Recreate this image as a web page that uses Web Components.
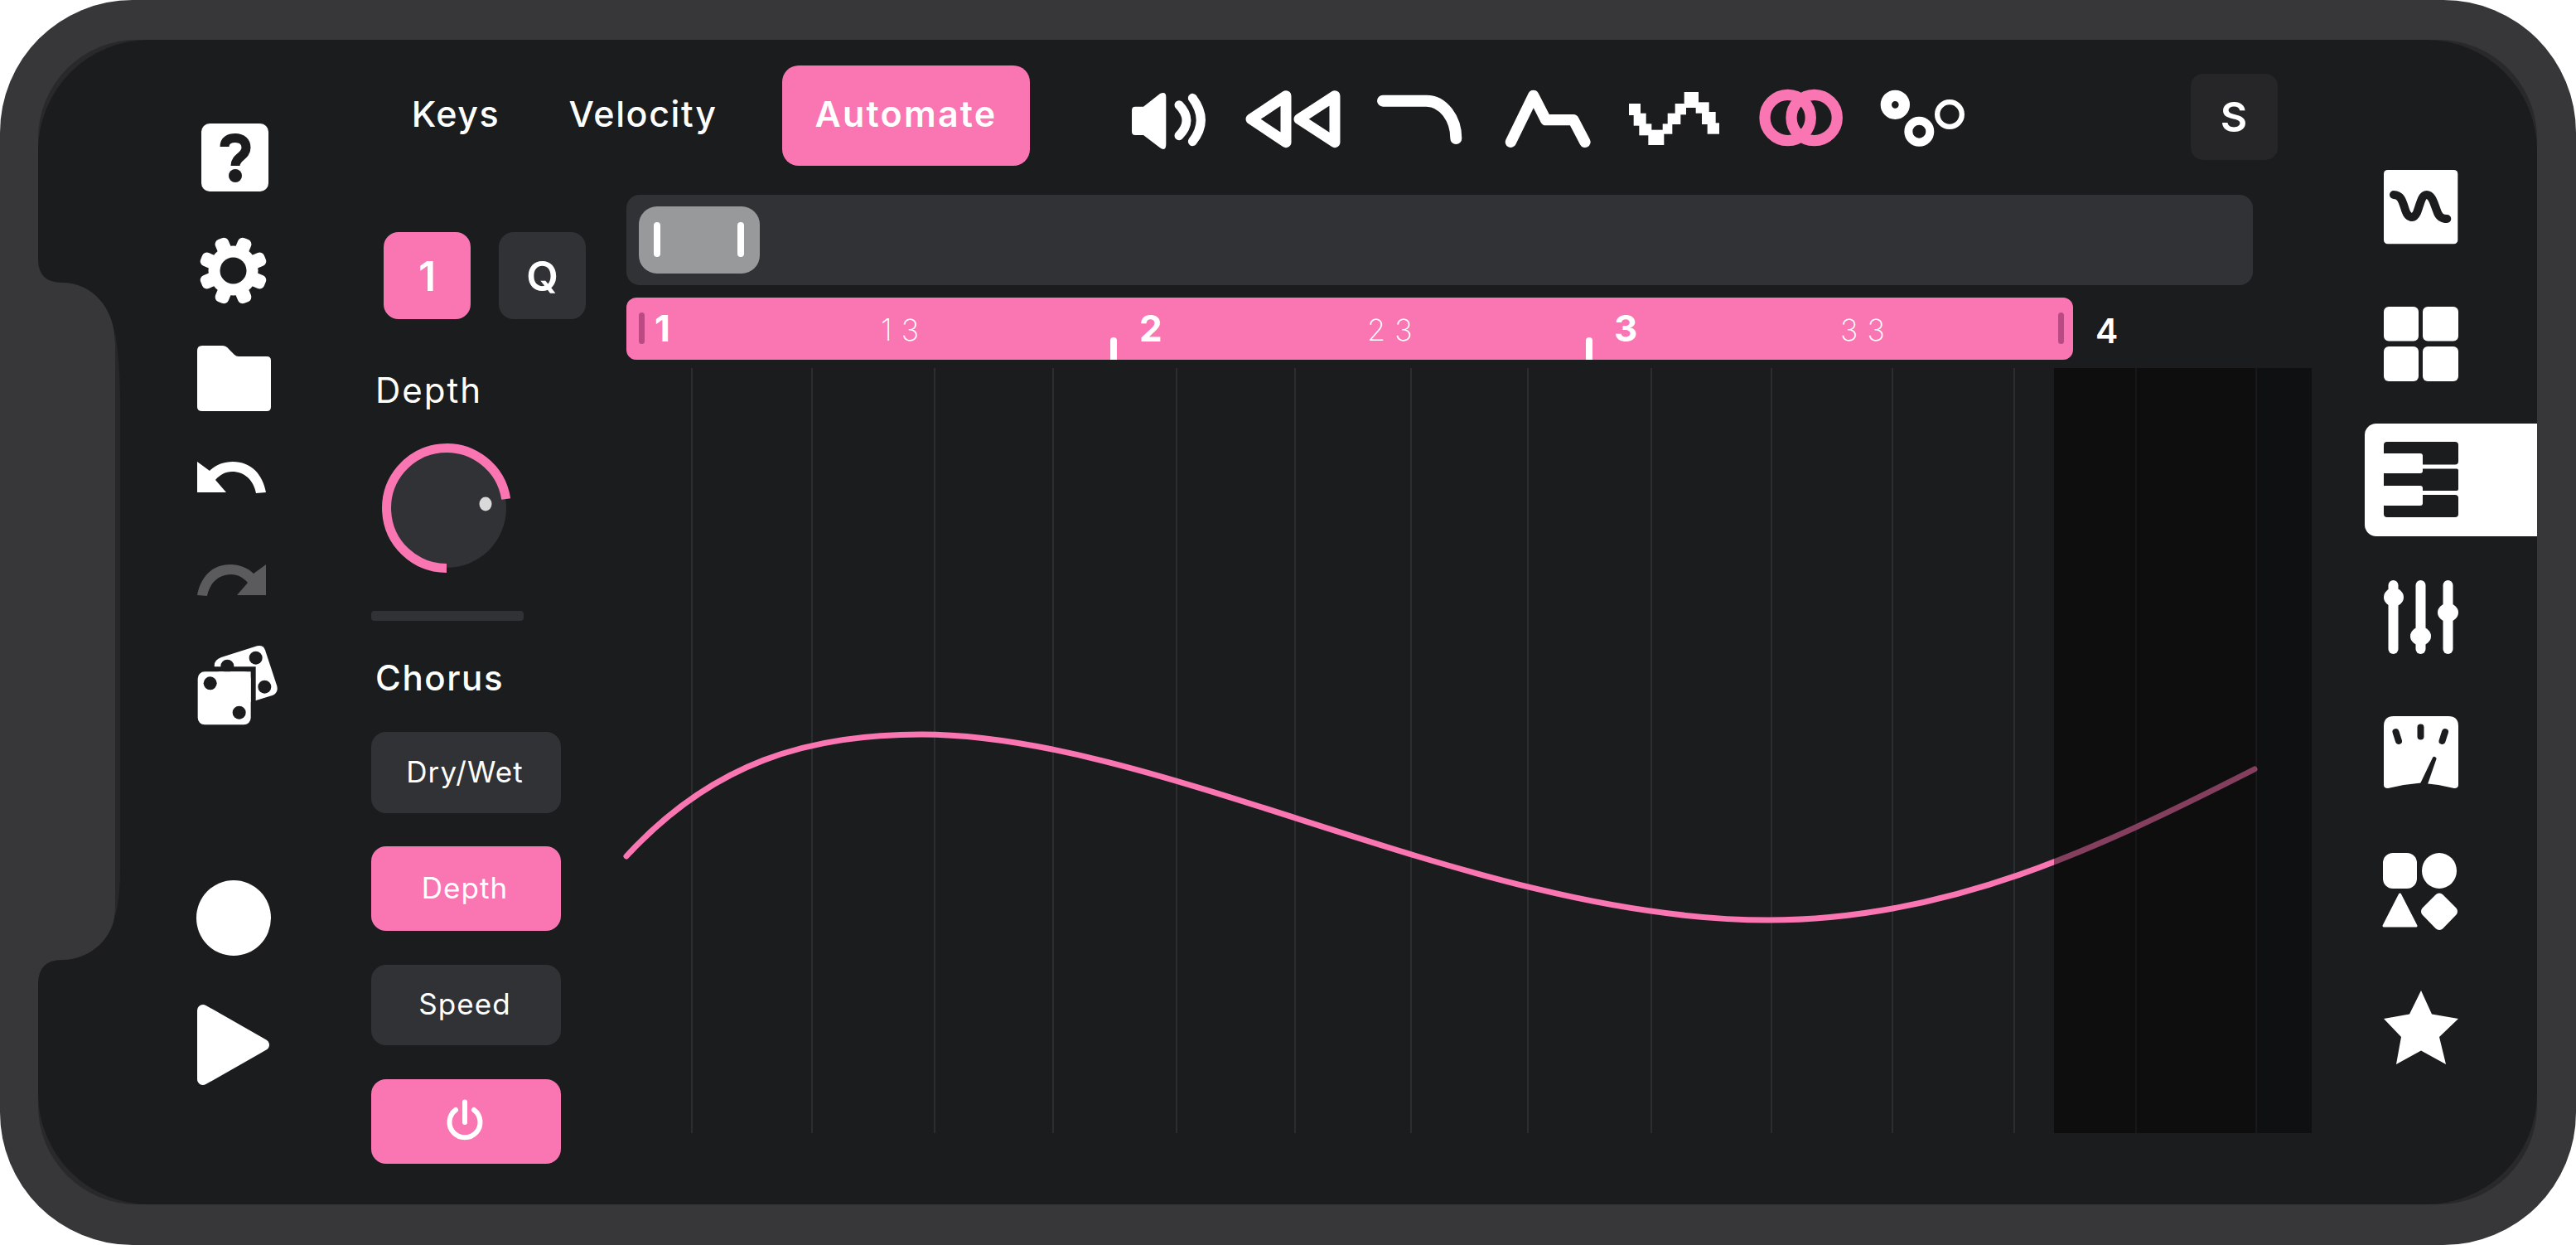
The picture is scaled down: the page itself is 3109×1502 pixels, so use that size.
<!DOCTYPE html>
<html lang="en"><head><meta charset="utf-8"><title>Automate</title>
<style>html,body{margin:0;padding:0;background:#fff;font-family:Inter,"Liberation Sans",sans-serif;color:#fff}</style></head>
<body>
<phone-frame>
  <left-rail></left-rail>
  <main-area></main-area>
  <right-rail></right-rail>
</phone-frame>
<script>
const BG='#1b1c1e',PINK='#f976b2',PANEL='#313236';
const ICONS={
help:[81,82,'0 0 81 82',`<rect width="81" height="82" rx="10" fill="#fff"/><path d="M28 28C28 20 34 17.5 41 17.5C49 17.5 54 22 54 29C54 40 41 40 41 51" fill="none" stroke="${BG}" stroke-width="11"/><ellipse cx="41" cy="63" rx="8" ry="8" fill="${BG}"/>`],
gear:[83,83,'-41.5 -41.5 83 83',`<g fill="#fff"><rect x="-41.5" y="-8.5" width="83" height="17" rx="6" transform="rotate(22.5)"/><rect x="-41.5" y="-8.5" width="83" height="17" rx="6" transform="rotate(67.5)"/><rect x="-41.5" y="-8.5" width="83" height="17" rx="6" transform="rotate(112.5)"/><rect x="-41.5" y="-8.5" width="83" height="17" rx="6" transform="rotate(157.5)"/></g><circle r="30" fill="#fff"/><circle r="16" fill="${BG}"/>`],
folder:[89,79,'0 0 89 79',`<path d="M6 0H30Q35 0 38 4L45 11Q47 13 50 13H84Q89 13 89 18V74Q89 79 84 79H6Q0 79 0 74V6Q0 0 6 0Z" fill="#fff"/>`],
undo:[83,38,'0 0 83 38',`<path d="M0 0L15 11C22 4 32 0 43 0C65 0 79 15 83 37L71 38C68 22 57 12 42 12C34 12 27 16 22 22L35 37H0Z" fill="#fff"/>`],
redo:[83,38,'0 0 83 38',`<path transform="matrix(-1 0 0 1 83 0)" d="M0 0L15 11C22 4 32 0 43 0C65 0 79 15 83 37L71 38C68 22 57 12 42 12C34 12 27 16 22 22L35 37H0Z" fill="#5b5b5d"/>`],
dice:[100,99,'35 20 300 297',`<path d="M125 68L255 27Q277 22 284 42L327 172Q333 195 312 205L200 240L100 100Q98 78 125 68Z" fill="#fff"/><circle cx="250" cy="70" r="24" fill="${BG}"/><circle cx="282" cy="175" r="24" fill="${BG}"/><circle cx="147" cy="100" r="24" fill="${BG}"/><path d="M232 102H250V320H232ZM20 102H232V120H20ZM20 102H40V320H20Z" fill="${BG}"/><rect x="40" y="120" width="192" height="192" rx="25" fill="#fff"/><circle cx="85" cy="162" r="24" fill="${BG}"/><circle cx="190" cy="268" r="24" fill="${BG}"/>`],
record:[90,91,'0 0 90 91',`<ellipse cx="45" cy="45.5" rx="45" ry="45.5" fill="#fff"/>`],
play:[87,97,'0 0 87 97',`<polygon points="7,7 80,48.5 7,90" fill="#fff" stroke="#fff" stroke-width="14" stroke-linejoin="round"/>`],
speaker:[92,69.3,'48 62 276 208',`<path d="M60 115H90L150 68Q172 58 172 80V250Q172 280 148 262L90 218H60Q48 218 48 205V128Q48 115 60 115Z" fill="#fff"/><g fill="none" stroke="#fff" stroke-width="33" stroke-linecap="round"><path d="M219 109Q273 165 219 220"/><path d="M268 84Q328 165 268 241"/></g>`],
rewind:[120,73.3,'450 50 360 220',`<g fill="none" stroke="#fff" stroke-width="39" stroke-linejoin="round"><path d="M606 76L480 160L606 244Z"/><path d="M783 76L654 160L783 244Z"/></g>`],
curve:[106.7,63.3,'30 70 320 190',`<path d="M57 96H215C275 96 322 160 322 232" fill="none" stroke="#fff" stroke-width="42" stroke-linecap="round"/>`],
peak:[108.3,73.3,'490 50 325 220',`<path d="M518 243L600 75L645 163H745L787 243" fill="none" stroke="#fff" stroke-width="40" stroke-linecap="round" stroke-linejoin="round"/>`],
stair:[111,66,'945 60 333 198',`<g fill="#fff"><rect x="948" y="105" width="42" height="42"/><rect x="965" y="140" width="45" height="45"/><rect x="985" y="178" width="45" height="42"/><rect x="1018" y="200" width="57" height="55"/><rect x="1070" y="178" width="35" height="37"/><rect x="1088" y="140" width="47" height="40"/><rect x="1115" y="105" width="40" height="40"/><rect x="1148" y="63" width="52" height="57"/><rect x="1190" y="100" width="48" height="40"/><rect x="1212" y="135" width="50" height="45"/><rect x="1232" y="175" width="43" height="40"/></g>`],
rings:[101.3,70,'38 50 304 210',`<g fill="none" stroke="${PINK}" stroke-width="40"><circle cx="142" cy="155" r="83"/><circle cx="238" cy="155" r="83"/></g>`],
dots:[103.3,70,'478 55 310 210',`<g fill="none" stroke="#fff"><circle cx="533" cy="110" r="33" stroke-width="40"/><circle cx="620" cy="207" r="39" stroke-width="30"/><circle cx="730" cy="145" r="44.5" stroke-width="19"/></g>`],
power:[44,52,'0 0 44 52',`<g fill="none" stroke="#fff" stroke-width="6" stroke-linecap="round"><path d="M22 3.5V28"/><path d="M11 13A18.5 18.5 0 1 0 33 13"/></g>`],
knob:[156,156,'0 0 156 156',`<circle cx="78" cy="78" r="72" fill="${PANEL}"/><path d="M78 150.5A72.5 72.5 0 1 1 149.7 67" fill="none" stroke="${PINK}" stroke-width="11"/><ellipse cx="125" cy="73" rx="7.5" ry="8.5" fill="#d9d9d9"/>`],
wave:[89.3,89.3,'52 45 268 268',`<rect x="52" y="45" width="268" height="268" rx="14" fill="#fff"/><path d="M88 135C115 135 120 160 130 190C140 220 160 225 172 200C185 165 190 135 207 135C228 135 235 170 245 195C252 215 262 222 281 222" fill="none" stroke="${BG}" stroke-width="30" stroke-linecap="round"/>`],
pads:[90,90,'0 0 90 90',`<g fill="#fff"><rect width="42" height="41.5" rx="6"/><rect x="47" width="43" height="41.5" rx="6"/><rect y="48" width="42" height="42" rx="6"/><rect x="47" y="48" width="43" height="42" rx="6"/></g>`],
piano:[90,91,'0 0 90 91',`<g fill="${BG}"><rect width="90" height="27.5" rx="4"/><rect y="32.6" width="90" height="26.4" rx="2"/><rect y="64" width="90" height="27" rx="4"/><rect y="27" width="47" height="6"/><rect y="58" width="47" height="7"/></g><g fill="#fff"><rect x="-2" y="14" width="49" height="24" rx="3"/><rect x="-2" y="53" width="49" height="24" rx="3"/></g>`],
mixer:[90,89,'0 0 90 89',`<g fill="#fff"><rect x="5.5" width="12" height="89" rx="6"/><ellipse cx="12" cy="20.5" rx="12" ry="11"/><rect x="38.5" width="12" height="89" rx="6"/><ellipse cx="44.5" cy="67.5" rx="12.5" ry="11"/><rect x="71.5" width="12" height="89" rx="6"/><ellipse cx="77.5" cy="39" rx="12.5" ry="11"/></g>`],
meter:[90,87,'0 0 90 87',`<path d="M12 0H78Q90 0 90 12V83Q90 87 85 87Q65 82 45 80.5Q25 82 5 87Q0 87 0 83V12Q0 0 12 0Z" fill="#fff"/><g stroke="${BG}" stroke-width="8" stroke-linecap="round"><path d="M14.5 19L18 30"/><path d="M44.5 13.5V24.5"/><path d="M74 19L70.5 30"/></g><path d="M59 50Q61 47 63.7 51L53 82H43.7Z" fill="${BG}"/>`],
shapes:[92,93,'0 0 92 93',`<g fill="#fff"><rect x="1" width="41" height="43" rx="12"/><ellipse cx="69" cy="21.5" rx="21" ry="21.5"/><polygon points="21.5,50 2,88 41,88" stroke="#fff" stroke-width="3" stroke-linejoin="round"/><polygon points="69,54.5 85,70.5 69,87 53,70.5" stroke="#fff" stroke-width="12" stroke-linejoin="round"/></g>`],
star:[90,89,'0 0 90 89',`<polygon points="45,0 58,28.5 90,34 67,56 75,89 45,72.5 15,89 21,56 0,34 31,28.5" fill="#fff"/>`]
};
function def(name,css,html){
  customElements.define(name,class extends HTMLElement{
    constructor(){super();this.attachShadow({mode:'open'}).innerHTML=`<style>${css}</style>${html}`;}
  });
}
customElements.define('x-icon',class extends HTMLElement{
  constructor(){super();this.attachShadow({mode:'open'});}
  connectedCallback(){
    const [w,h,vb,body]=ICONS[this.getAttribute('name')];
    this.shadowRoot.innerHTML=`<style>:host{display:block;flex:none;width:${w}px;height:${h}px}svg{display:block;overflow:visible}</style><svg width="${w}" height="${h}" viewBox="${vb}" aria-hidden="true">${body}</svg>`;
  }
});
def('phone-frame',`
 :host{display:block;position:relative;width:3109px;height:1502px;overflow:hidden;background:#fff}
 .bezel{box-sizing:border-box;width:100%;height:100%;background:#37373a;border-radius:160px;padding:48px 47px 49px 46px}
 .well{width:100%;height:100%;background:#29292b;border-radius:119px}
 .screen{position:relative;display:flex;width:100%;height:100%;background:${BG};border-radius:134px;overflow:visible}
 svg{position:absolute;left:0;top:0;pointer-events:none}`,
 `<div class="bezel"><div class="well"><div class="screen"><slot></slot></div></div></div>
 <svg width="200" height="1502" viewBox="0 0 200 1502" aria-hidden="true"><path d="M139 400Q145 440 145 480V1050Q145 1085 139 1105Z" fill="#27272a"/><path d="M40 300H46V313Q46 341 75 341C110 341 139 370 139 415V1097C139 1130 110 1158 75 1158Q46 1158 46 1187V1200H40Z" fill="#37373a"/></svg>`);
def('left-rail',`:host{display:flex;flex:none;flex-direction:column;align-items:flex-start;box-sizing:border-box;width:402px;padding:101px 0 0 189px}`,
 `<x-icon name="help" style="margin-left:8px"></x-icon>
  <x-icon name="gear" style="margin:54px 0 0 5px"></x-icon>
  <x-icon name="folder" style="margin:49px 0 0 3px"></x-icon>
  <x-icon name="undo" style="margin:61px 0 0 3px"></x-icon>
  <x-icon name="redo" style="margin:86px 0 0 3px"></x-icon>
  <x-icon name="dice" style="margin:58px 0 0 2px"></x-icon>
  <x-icon name="record" style="margin:186px 0 0 2px"></x-icon>
  <x-icon name="play" style="margin:59px 0 0 3px"></x-icon>`);
def('right-rail',`:host{display:flex;flex:none;flex-direction:column;align-items:flex-start;box-sizing:border-box;width:208px;padding:157px 0 0 23px}
 .tab{box-sizing:border-box;width:208px;height:136px;margin:51px 0 0 -23px;padding:22px 0 0 23px;background:#fff;border-radius:14px 0 0 14px}`,
 `<x-icon name="wave"></x-icon>
  <x-icon name="pads" style="margin-top:76px"></x-icon>
  <div class="tab"><x-icon name="piano"></x-icon></div>
  <x-icon name="mixer" style="margin-top:53px"></x-icon>
  <x-icon name="meter" style="margin-top:75px"></x-icon>
  <x-icon name="shapes" style="margin:78px 0 0 -2px"></x-icon>
  <x-icon name="star" style="margin-top:73px"></x-icon>`);
def('tab-item',`:host{display:flex;flex:none;align-items:center;justify-content:center;box-sizing:border-box;height:121px;padding-bottom:4px;border-radius:20px;font:500 43px/1 Inter,sans-serif;letter-spacing:1.6px;color:#fff}
 :host([active]){background:${PINK};font-weight:600;letter-spacing:2.2px}`,`<slot></slot>`);
def('top-bar',`:host{display:flex;align-items:flex-start;box-sizing:border-box;height:152px;padding:31px 0 0 52px}
 .ic{display:flex;align-items:flex-start;margin-top:-31px}
 .s{flex:none;display:flex;align-items:center;justify-content:center;box-sizing:border-box;width:105px;height:104px;margin:10px 0 0 271px;background:#262628;border-radius:15px;font:600 50px/1 Inter,sans-serif;color:#fff}`,
 `<tab-item style="width:100px">Keys</tab-item>
  <tab-item style="width:176px;margin-left:88px">Velocity</tab-item>
  <tab-item active style="width:299px;margin-left:80px">Automate</tab-item>
  <div class="ic" style="margin-left:123px">
   <x-icon name="speaker" style="margin-top:63px"></x-icon>
   <x-icon name="rewind" style="margin:59px 0 0 42px"></x-icon>
   <x-icon name="curve" style="margin:65px 0 0 40px"></x-icon>
   <x-icon name="peak" style="margin:59px 0 0 47px"></x-icon>
   <x-icon name="stair" style="margin:62px 0 0 43px"></x-icon>
   <x-icon name="rings" style="margin:59px 0 0 47px"></x-icon>
   <x-icon name="dots" style="margin:60px 0 0 45px"></x-icon>
  </div>
  <div class="s">S</div>`);
def('ctl-button',`:host{display:flex;align-items:center;justify-content:center;box-sizing:border-box;width:229px;padding:0 3px 2px 0;background:${PANEL};border-radius:18px;font:400 35px/1 Inter,sans-serif;letter-spacing:1.1px;color:#fff}
 :host([on]){background:${PINK}}`,`<slot></slot>`);
def('side-panel',`:host{display:block;flex:none;width:229px;padding-top:80px}
 .row{display:flex;gap:34px;margin-left:15px}
 .sq{flex:none;display:flex;align-items:center;justify-content:center;width:105px;height:105px;background:${PANEL};border-radius:18px;font:600 50px/1 Inter,sans-serif;color:#fff}
 .sq.on{background:${PINK}}
 .lab{height:50px;margin-left:5px;font:400 42px/50px Inter,sans-serif;letter-spacing:2px;color:#fff}
 .slider{height:12px;margin:46px 45px 0 0;background:${PANEL};border-radius:4px}`,
 `<div class="row"><div class="sq on">1</div><div class="sq">Q</div></div>
  <div class="lab" style="margin-top:61px">Depth</div>
  <x-icon name="knob" style="margin:39px 0 0 13px"></x-icon>
  <div class="slider"></div>
  <div class="lab" style="margin-top:44px;font-weight:500;letter-spacing:1.6px">Chorus</div>
  <ctl-button style="margin-top:40px;height:98px">Dry/Wet</ctl-button>
  <ctl-button on style="margin-top:40px;height:102px">Depth</ctl-button>
  <ctl-button style="margin-top:41px;height:97px">Speed</ctl-button>
  <ctl-button on style="margin-top:41px;height:102px"><x-icon name="power"></x-icon></ctl-button>`);
const LINES=[835,980,1128,1271,1420,1563,1703,1844,1993,2138,2284,2431,2578,2723];
def('time-line',`:host{display:block;flex:none;width:2034px;padding-top:35px}
 .over{position:relative;box-sizing:border-box;width:1963px;height:109px;padding:14px 0 0 15px;background:${PANEL};border-radius:16px}
 .handle{display:flex;justify-content:space-between;box-sizing:border-box;width:146px;height:81px;padding:19px 19px 0 18px;background:#98999b;border-radius:22px}
 .handle i{display:block;width:8px;height:42px;background:#fff;border-radius:4px}
 .rrow{display:flex;align-items:center;margin-top:15px}
 .ruler{position:relative;flex:none;width:1746px;height:75px;background:${PINK};border-radius:12px}
 .ruler span{position:absolute;color:#fff;line-height:1}
 .b{top:15px;font:700 44px/1 Inter,sans-serif}
 .t{top:21px;font:200 36px/1 Inter,sans-serif;word-spacing:1px}
 .h{position:absolute;top:18px;width:7px;height:38px;background:#b94a83;border-radius:4px}
 .k{position:absolute;top:48px;width:8px;height:27px;background:#fff;border-radius:4px 4px 0 0}
 .four{margin:6px 0 0 27px;font:600 41px/1 Inter,sans-serif;color:#fff}
 svg{display:block;margin-top:10px;overflow:visible}`,
 `<div class="over"><div class="handle"><i></i><i></i></div></div>
  <div class="rrow"><div class="ruler">
    <div class="h" style="left:15px"></div><div class="h" style="left:1728px"></div>
    <span class="b" style="left:34px">1</span><span class="t" style="left:307px">1 3</span>
    <div class="k" style="left:584px"></div><span class="b" style="left:619px">2</span><span class="t" style="left:894px">2 3</span>
    <div class="k" style="left:1158px"></div><span class="b" style="left:1192px">3</span><span class="t" style="left:1465px">3 3</span>
  </div><div class="four">4</div></div>
  <svg width="2034" height="923" viewBox="756 444 2034 923" aria-hidden="true">
   ${LINES.map(x=>`<rect x="${x-1}" y="444" width="2" height="923" fill="#2c2d30"/>`).join('')}
   <path d="M756 1033C860 920 975 886 1112 886C1400 886 1780 1110 2134 1110C2350 1110 2530 1025 2721 928" fill="none" stroke="${PINK}" stroke-width="7" stroke-linecap="round"/>
   <rect x="2479" y="444" width="244" height="923" fill="#000" fill-opacity=".47"/>
   <rect x="2723" y="444" width="67" height="923" fill="#000" fill-opacity=".42"/>
  </svg>`);
def('main-area',`:host{display:block;flex:none;width:2406px}
 .body{display:flex;gap:79px}`,
 `<top-bar></top-bar><div class="body"><side-panel></side-panel><time-line></time-line></div>`);
</script>
</body></html>
